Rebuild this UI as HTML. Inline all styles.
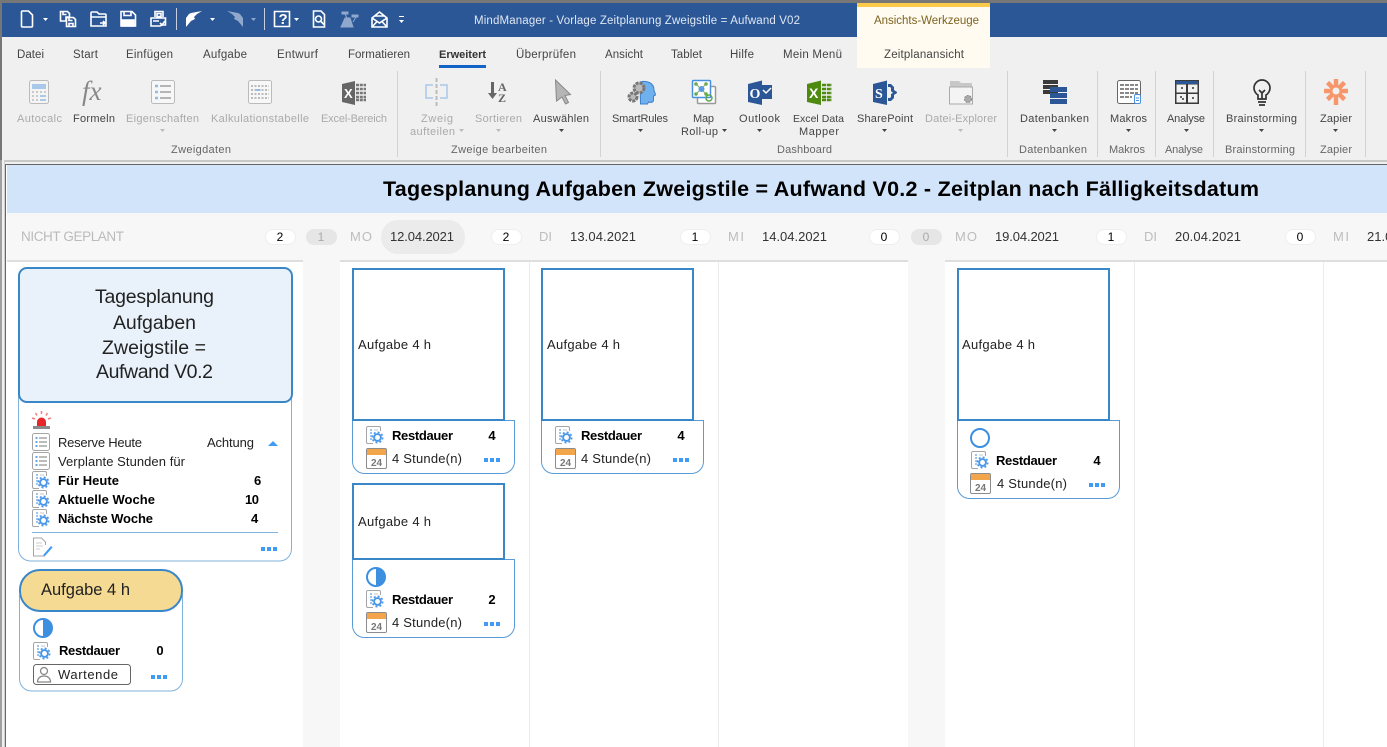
<!DOCTYPE html>
<html lang="de"><head><meta charset="utf-8"><title>MindManager</title>
<style>
html,body{margin:0;padding:0;width:1387px;height:747px;overflow:hidden;background:#fff}
svg{display:block}
text{font-family:"Liberation Sans",sans-serif;font-size:11px;fill:#444}
.d{fill:#aaa}.g{fill:#666}
.tab{font-size:11.5px;fill:#444}
.w{fill:#dfe7f3;font-size:11.5px}
.b{font-weight:bold;fill:#000;font-size:13px}
.n{fill:#222;font-size:13px}
.h{fill:#bdbdbd;font-size:13px}
.dt{fill:#333;font-size:13px}
.p{fill:#000;font-size:12px;text-anchor:middle}
.p2{fill:#aaa;font-size:12px;text-anchor:middle}
.c24{font-size:10px;font-weight:bold;fill:#777}
.ic{fill:none;stroke:#fff;stroke-width:1.6}
.t18{font-size:19.5px;fill:#222}
</style></head><body>
<svg width="1387" height="747" viewBox="0 0 1387 747" xmlns="http://www.w3.org/2000/svg">
<defs>
<symbol id="list" width="18" height="18" viewBox="0 0 18 18"><rect x=".5" y=".5" width="17" height="17" rx="2" fill="#fff" stroke="#a5a5a5"/><path d="M3.500 5h2M3.500 9h2M3.500 13h2" stroke="#6aa5e5" stroke-width="2"/><path d="M7 5h8M7 9h8M7 13h8" stroke="#a5a5a5" stroke-width="1.600"/></symbol>
<symbol id="gear" width="18" height="18" viewBox="0 0 18 18"><path d="M7 17.500H2A1.500 1.500 0 0 1 .5 16V2A1.500 1.500 0 0 1 2 .5h11A1.500 1.500 0 0 1 14.500 2v3" fill="none" stroke="#a5a5a5"/><path d="M4 4h2M4 7h2M4 10h2M4 13h2" stroke="#7ab0ea" stroke-width="1.600"/><path d="M8 4h4" stroke="#d5d5d5" stroke-width="1.400"/><circle cx="11.500" cy="11.500" r="5.500" fill="#fff"/><circle cx="11.500" cy="11.500" r="3.400" fill="#fff" stroke="#4a96e8" stroke-width="1.900"/><circle cx="11.500" cy="11.500" r="5.200" fill="none" stroke="#4a96e8" stroke-width="1.600" stroke-dasharray="2 2.080"/></symbol>
<symbol id="cal" width="21" height="21" viewBox="0 0 21 21"><rect x=".5" y=".5" width="20" height="20" rx="1.500" fill="#fff" stroke="#8c8c8c"/><rect x="1" y="1" width="19" height="6" fill="#f2a54a"/></symbol>
<symbol id="half" width="20" height="20" viewBox="0 0 20 20"><circle cx="10" cy="10" r="9" fill="#fff" stroke="#3d8fe0" stroke-width="2"/><path d="M10 1a9 9 0 0 1 0 18z" fill="#3d8fe0"/></symbol>
<symbol id="dots" width="16" height="4" viewBox="0 0 16 4"><path d="M0 0h4v4H0zM6 0h4v4H6zM12 0h4v4h-4z" fill="#3f9bf5"/></symbol>
<symbol id="arr" width="5" height="3" viewBox="0 0 5 3"><path d="M0 0h5L2.500 3z"/></symbol>
</defs>

<!-- title bar -->
<rect width="1387" height="3" fill="#777"/>
<rect y="3" width="1387" height="34" fill="#2b5797"/>
<rect y="37" width="1387" height="123" fill="#f0f0f0"/>
<rect y="0" width="2" height="160" fill="#777"/>
<!-- qat icons -->
<g class="ic">
<path d="M22.500 11h6l4 4v11a1 1 0 0 1-1 1h-9a1 1 0 0 1-1-1V12a1 1 0 0 1 1-1z"/>
<path d="M60.500 11.500h7l2 2v3.500h-3.500v4h-5.500z"/><path d="M66.500 17.500h7l2 2v7h-9z"/><path d="M63 11.500v3h3.500M69 17.500v3h3.500M69 26.500v-3h4v3"/>
<path d="M91 26V13a1 1 0 0 1 1-1h5l2 2h6a1 1 0 0 1 1 1v11zM91 17h15"/><path d="M100 23h5M103 21l2 2-2 2"/>
<path d="M121 11.500h11l3.500 3.500v11h-14.500zM124 11.500v4h7v-4"/><path d="M122 20h12v6h-12z" fill="#fff"/>
<path d="M155 17v-5.500h8V17M151 18h14.500v7H162l-2 1h-9zM157 13.500h4v3h-4z"/><path d="M153 21h6M160 23l2 2 3-4"/>
<path d="M274.500 11.500h15v15h-15z"/>
<path d="M314 11h7l3.500 3.500V27h-11V11z"/><circle cx="318.500" cy="19" r="3"/><path d="M321 21.500l3 3"/>
<path d="M372 18l7.500-6 7.500 6v9h-15zM372 18l7.500 5 7.500-5M372 27l5.500-6M387 27l-5.500-6M375 16h9"/>
</g>
<text x="278.500" y="24" style="font-size:15px;font-weight:bold;fill:#fff">?</text>
<path d="M176.500 8v22M264.500 8v22" stroke="#c5cfdf"/>
<path d="M186 27v-9l3-4 2-1 11-2-5 3-3 3 1 2-4 2z" fill="#fff"/>
<path d="M243 27v-9l-3-4-2-1-11-2 5 3 3 3-1 2 4 2z" fill="#8fa8cb"/>
<path d="M342 12h6v2h-6zM352 15h6v2h-6zM345 14l2 4M356 17l-3 5M345 18h5l3 9h-12z" fill="#8fa8cb" stroke="#8fa8cb"/>
<g fill="#fff"><use href="#arr" x="43" y="18"/><use href="#arr" x="210" y="18"/><use href="#arr" x="294" y="18"/><use href="#arr" x="399" y="20"/><rect x="399" y="16" width="5" height="1"/></g>
<use href="#arr" x="251" y="18" fill="#8fa8cb"/>
<text x="474" y="24" class="w" textLength="326">MindManager - Vorlage Zeitplanung Zweigstile = Aufwand V02</text>

<!-- context tab -->
<rect x="857" y="3" width="133" height="65" fill="#fffbf0"/>
<rect x="857" y="3" width="133" height="4" fill="#fdc94a"/>
<text x="874" y="24" textLength="105" style="fill:#7d6320;font-size:11.500px">Ansichts-Werkzeuge</text>
<text x="884" y="58" class="tab" textLength="80">Zeitplanansicht</text>

<!-- tabs -->
<text x="17" y="58" class="tab" textLength="27">Datei</text>
<text x="73" y="58" class="tab" textLength="25">Start</text>
<text x="126" y="58" class="tab" textLength="47">Einfügen</text>
<text x="203" y="58" class="tab" textLength="44">Aufgabe</text>
<text x="277" y="58" class="tab" textLength="41">Entwurf</text>
<text x="348" y="58" class="tab" textLength="62">Formatieren</text>
<text x="439" y="58" class="tab" textLength="47" style="font-weight:bold;fill:#333;font-size:11px">Erweitert</text>
<rect x="439" y="65" width="47" height="3" fill="#1464c8"/>
<text x="516" y="58" class="tab" textLength="60">Überprüfen</text>
<text x="605" y="58" class="tab" textLength="38">Ansicht</text>
<text x="671" y="58" class="tab" textLength="31">Tablet</text>
<text x="730" y="58" class="tab" textLength="24">Hilfe</text>
<text x="783" y="58" class="tab" textLength="59">Mein Menü</text>

<!-- ribbon separators -->
<path d="M397.500 71v86M600.500 71v86M1007.500 71v86M1097.500 71v86M1155.500 71v86M1213.500 71v86M1305.500 71v86M1365.500 71v86" stroke="#d2d2d2"/>

<!-- ribbon labels -->
<text x="17" y="122" class="d" textLength="45">Autocalc</text>
<text x="73" y="122" textLength="42">Formeln</text>
<text x="126" y="122" class="d" textLength="73">Eigenschaften</text>
<text x="211" y="122" class="d" textLength="98">Kalkulationstabelle</text>
<text x="321" y="122" class="d" textLength="66">Excel-Bereich</text>
<text x="421" y="122" class="d" textLength="32">Zweig</text>
<text x="410" y="135" class="d" textLength="45">aufteilen</text>
<text x="475" y="122" class="d" textLength="47">Sortieren</text>
<text x="533" y="122" textLength="56">Auswählen</text>
<text x="612" y="122" textLength="56">SmartRules</text>
<text x="693" y="122" textLength="21">Map</text>
<text x="681" y="135" textLength="37">Roll-up</text>
<text x="739" y="122" textLength="41">Outlook</text>
<text x="793" y="122" textLength="51" style="font-size:10.500px">Excel Data</text>
<text x="799" y="135" textLength="40">Mapper</text>
<text x="857" y="122" textLength="56">SharePoint</text>
<text x="925" y="122" class="d" textLength="72">Datei-Explorer</text>
<text x="1020" y="122" textLength="69">Datenbanken</text>
<text x="1110" y="122" textLength="37">Makros</text>
<text x="1167" y="122" textLength="38">Analyse</text>
<text x="1226" y="122" textLength="71">Brainstorming</text>
<text x="1320" y="122" textLength="32">Zapier</text>
<!-- group labels -->
<text x="171" y="153" class="g" textLength="60">Zweigdaten</text>
<text x="451" y="153" class="g" textLength="96">Zweige bearbeiten</text>
<text x="777" y="153" class="g" textLength="55">Dashboard</text>
<text x="1019" y="153" class="g" textLength="68">Datenbanken</text>
<text x="1109" y="153" class="g" textLength="36">Makros</text>
<text x="1165" y="153" class="g" textLength="38">Analyse</text>
<text x="1225" y="153" class="g" textLength="70">Brainstorming</text>
<text x="1320" y="153" class="g" textLength="32">Zapier</text>
<!-- dropdown arrows -->
<g fill="#bbb"><use href="#arr" x="160" y="129"/><use href="#arr" x="459" y="129"/><use href="#arr" x="496" y="129"/><use href="#arr" x="958" y="129"/></g>
<g fill="#444"><use href="#arr" x="559" y="129"/><use href="#arr" x="638" y="129"/><use href="#arr" x="722" y="129"/><use href="#arr" x="757" y="129"/><use href="#arr" x="882" y="129"/><use href="#arr" x="1052" y="129"/><use href="#arr" x="1126" y="129"/><use href="#arr" x="1184" y="129"/><use href="#arr" x="1259" y="129"/><use href="#arr" x="1333" y="129"/></g>

<!-- ribbon icons -->
<rect x="29.500" y="80.500" width="19" height="23" rx="2" fill="#f4f4f4" stroke="#bbb"/><rect x="32" y="84" width="14" height="5" fill="#a9c8ea"/><path d="M32 92h2M36 92h2M40 92h2M44 92h2M32 96h2M36 96h2M32 100h2M36 100h2" stroke="#bbb" stroke-width="1.500"/><path d="M40 96h6M40 100h6" stroke="#7fb0e0" stroke-width="1.300"/>
<text x="82" y="100" style="font-family:'Liberation Serif',serif;font-style:italic;font-size:27px;fill:#888">fx</text>
<rect x="151.500" y="80.500" width="23" height="23" rx="2" fill="#f7f7f7" stroke="#bbb"/><path d="M155 86h3M155 92h3M155 98h3" stroke="#8fbbe8" stroke-width="2.500"/><path d="M160 86h11M160 92h11M160 98h11" stroke="#b5b5b5" stroke-width="2"/>
<rect x="248.500" y="80.500" width="23" height="23" rx="2" fill="#f7f7f7" stroke="#bbb"/><path d="M251 86h18M251 90h18M251 94h18M251 98h18" stroke="#bbb" stroke-width="2" stroke-dasharray="2 1.500"/><path d="M256.500 90h4" stroke="#8fbbe8" stroke-width="2"/>
<path d="M342 84l13-3v24l-13-3z" fill="#666"/><path d="M356 85h10M356 89h10M356 93h10M356 97h10M356 100h10" stroke="#777" stroke-width="2.500" stroke-dasharray="3 .8"/><text x="344" y="98" style="font-size:13px;font-weight:bold;fill:#fff">X</text>
<path d="M436.500 78v28" stroke="#bbb" stroke-width="2" stroke-dasharray="4 2"/><path d="M433 85h-7v13h7M440 85h7v13h-7" fill="none" stroke="#a9c8ea" stroke-width="1.500"/>
<path d="M491 82h3v11h3l-4.500 6-4.500-6h3z" fill="#666"/><text x="498" y="91" style="font-family:'Liberation Serif',serif;font-size:12px;font-weight:bold;fill:#666">A</text><text x="498" y="102" style="font-family:'Liberation Serif',serif;font-size:12px;font-weight:bold;fill:#666">Z</text>
<path d="M555.500 80l15 14.500-5.500 1 3.500 7-3 1.500-3.500-7-5.500 4z" fill="#b5b5b5" stroke="#888"/>
<!-- smartrules -->
<path d="M640 82c7-2 14 1 14 8 0 2 2 4 1.500 5l-2 1v4c0 2-2 3-5 2l-1 2h-7z" fill="#6fb0ee" stroke="#3d80c8"/>
<circle cx="639" cy="88" r="5" fill="#bbb" stroke="#777" stroke-width="3" stroke-dasharray="3 1"/><circle cx="633" cy="97" r="4" fill="#bbb" stroke="#777" stroke-width="3" stroke-dasharray="3 1"/>
<!-- map roll-up -->
<rect x="697.500" y="86.500" width="18" height="17" rx="1" fill="#fff" stroke="#999" stroke-width="1.500"/><rect x="692.500" y="80.500" width="18" height="17" rx="1" fill="#fff" stroke="#4a90e0" stroke-width="1.500"/><path d="M696 84l5 5 5-5M696 94l5-5 5 5" stroke="#7fb070" fill="none"/><circle cx="701.500" cy="89" r="3" fill="#5a9be0"/><circle cx="696" cy="84" r="1.800" fill="#6aa84f"/><circle cx="706" cy="84" r="1.800" fill="#6aa84f"/><circle cx="696" cy="94" r="1.800" fill="#6aa84f"/><circle cx="706" cy="94" r="1.800" fill="#6aa84f"/><circle cx="709" cy="98" r="3" fill="none" stroke="#5aa84a" stroke-width="1.500"/>
<!-- outlook -->
<path d="M748 84l14-3.500V105l-14-3z" fill="#2b5797"/><path d="M762 85h10v14h-10z" fill="#2b5797"/><path d="M763 90l3 3 5-5" stroke="#fff" stroke-width="1.500" fill="none"/><text x="749.500" y="98" style="font-size:14px;font-weight:bold;fill:#fff;font-family:'Liberation Serif',serif">O</text>
<!-- excel -->
<path d="M807 84l14-3.500V105l-14-3z" fill="#4e8a0f"/><path d="M822 85h10M822 89h10M822 93h10M822 97h10M822 100h10" stroke="#4e8a0f" stroke-width="2.500" stroke-dasharray="4 .8"/><text x="809" y="98" style="font-size:14px;font-weight:bold;fill:#fff">X</text>
<!-- sharepoint -->
<path d="M873 84l14-3.500V105l-14-3z" fill="#2b5797"/><path d="M888 84h3l3 3v3l3 2v1l-3 2v3l-3 3h-3v-3h2l1-1v-3l2-1-2-2v-3l-1-1h-2z" fill="#2b5797"/><text x="875" y="98" style="font-size:14px;font-weight:bold;fill:#fff;font-family:'Liberation Serif',serif">S</text>
<!-- datei explorer -->
<path d="M950 83v-2h9l2 2h11v6h-22z" fill="#c8c8c8"/><path d="M949.500 104V87h23v17z" fill="#f4f4f4" stroke="#aaa"/><circle cx="968" cy="99" r="3.500" fill="#aaa" stroke="#888" stroke-dasharray="2 1"/>
<!-- datenbanken -->
<path d="M1043 80h15v4h-15zM1043 85h15v4h-15zM1043 90h15v4h-15z" fill="#3a3a3a"/><path d="M1050 87h17v5h-17zM1050 93h17v5h-17zM1050 99h17v5h-17z" fill="#2b5797"/>
<!-- makros -->
<rect x="1117.500" y="80.500" width="23" height="23" rx="2" fill="#fff" stroke="#666"/><path d="M1120 85h18M1120 89h18M1120 93h18M1120 97h12" stroke="#777" stroke-width="1.800" stroke-dasharray="4 1"/><rect x="1134.500" y="94.500" width="6" height="9" rx="1.500" fill="#fff" stroke="#4a90e0"/><path d="M1136 98h3M1136 100.500h3" stroke="#4a90e0"/>
<!-- analyse -->
<rect x="1175" y="80" width="24" height="24" fill="#3a3a3a"/><rect x="1176.500" y="84.500" width="9.500" height="8" fill="#f2f2f2"/><rect x="1188" y="84.500" width="9.500" height="8" fill="#f2f2f2"/><rect x="1176.500" y="94" width="9.500" height="8.500" fill="#f2f2f2"/><rect x="1188" y="94" width="9.500" height="8.500" fill="#f2f2f2"/><rect x="1176" y="81" width="22" height="3" fill="#2b5797"/><path d="M1181 88h2M1192 88h2M1180 97h2M1182 99h2M1192 98h2" stroke="#333" stroke-width="1.500"/>
<!-- bulb -->
<path d="M1258 99v-4c-2-1-4-4-4-7a8 8 0 0 1 16 0c0 3-2 6-4 7v4zM1258 102h8M1259 105h6M1259 90l3 3 3-3M1262 93v6" fill="none" stroke="#333" stroke-width="1.700"/>
<!-- zapier -->
<g stroke="#f5966b" stroke-width="4.500"><path d="M1336 79v26M1324 91h24M1327.500 82.500l17 17M1344.500 82.500l-17 17"/></g><circle cx="1336" cy="91" r="3.500" fill="#f0f0f0"/>

<!-- canvas frame -->
<rect y="160" width="1387" height="587" fill="#fff"/>
<rect y="160" width="1387" height="2" fill="#c8c8c8"/>
<rect y="162" width="1387" height="2" fill="#f0f0f0"/>
<rect y="164" width="1387" height="1" fill="#666"/>
<rect y="160" width="2" height="587" fill="#a0a0a0"/>
<rect x="2" y="160" width="2" height="587" fill="#f0f0f0"/>
<rect x="4" y="160" width="1" height="587" fill="#d0d0d0"/>
<rect x="5" y="164" width="1" height="583" fill="#666"/>

<!-- header -->
<rect x="7" y="165" width="1380" height="48" fill="#d2e4f9"/>
<text x="383" y="196" textLength="876" style="font-size:21.500px;font-weight:bold;fill:#000">Tagesplanung Aufgaben Zweigstile = Aufwand V0.2 - Zeitplan nach Fälligkeitsdatum</text>
<rect x="7" y="213" width="1380" height="47" fill="#f7f7f7"/>
<rect x="7" y="260" width="296" height="2" fill="#dedede"/>
<rect x="340" y="260" width="568" height="2" fill="#dedede"/>
<rect x="945" y="260" width="442" height="2" fill="#dedede"/>
<rect x="303" y="260" width="37" height="487" fill="#f7f7f7"/>
<rect x="908" y="260" width="37" height="487" fill="#f7f7f7"/>
<path d="M529.500 262V747M718.500 262V747M1134.500 262V747M1323.500 262V747" stroke="#ececec"/>

<!-- date row -->
<text x="21" y="241" class="h" textLength="103" style="font-size:13.500px;fill:#bbb">NICHT GEPLANT</text>
<rect x="265.500" y="229.500" width="30" height="15" rx="7.500" fill="#fff" stroke="#eee"/><text x="280" y="241" class="p">2</text>
<rect x="306" y="229" width="31" height="16" rx="8" fill="#e6e6e6"/><text x="321" y="241" class="p2">1</text>
<text x="350" y="241" class="h" textLength="22">MO</text>
<rect x="381" y="220" width="84" height="34" rx="17" fill="#ebebeb"/>
<text x="390" y="241" class="dt" textLength="64">12.04.2021</text>
<rect x="491.500" y="229.500" width="30" height="15" rx="7.500" fill="#fff" stroke="#eee"/><text x="506" y="241" class="p">2</text>
<text x="539" y="241" class="h" textLength="13">DI</text>
<text x="570" y="241" class="dt" textLength="66">13.04.2021</text>
<rect x="680.500" y="229.500" width="30" height="15" rx="7.500" fill="#fff" stroke="#eee"/><text x="695" y="241" class="p">1</text>
<text x="728" y="241" class="h" textLength="16">MI</text>
<text x="762" y="241" class="dt" textLength="65">14.04.2021</text>
<rect x="869.500" y="229.500" width="30" height="15" rx="7.500" fill="#fff" stroke="#eee"/><text x="884" y="241" class="p">0</text>
<rect x="911" y="229" width="31" height="16" rx="8" fill="#e6e6e6"/><text x="926" y="241" class="p2">0</text>
<text x="955" y="241" class="h" textLength="22">MO</text>
<text x="995" y="241" class="dt" textLength="64">19.04.2021</text>
<rect x="1096.500" y="229.500" width="30" height="15" rx="7.500" fill="#fff" stroke="#eee"/><text x="1111" y="241" class="p">1</text>
<text x="1144" y="241" class="h" textLength="13">DI</text>
<text x="1175" y="241" class="dt" textLength="66">20.04.2021</text>
<rect x="1285.500" y="229.500" width="30" height="15" rx="7.500" fill="#fff" stroke="#eee"/><text x="1300" y="241" class="p">0</text>
<text x="1333" y="241" class="h" textLength="16">MI</text>
<text x="1367" y="241" class="dt">21.04.2021</text>

<!-- root card -->
<path d="M18.500 395v154a12 12 0 0 0 12 12h249a12 12 0 0 0 12-12V395" fill="#fff" stroke="#7fb2dd"/>
<rect x="19" y="268" width="273" height="134" rx="8" fill="#e9f2fb" stroke="#3a87c8" stroke-width="2"/>
<text x="95" y="303" textLength="119" class="t18">Tagesplanung</text>
<text x="113" y="329" textLength="83" class="t18">Aufgaben</text>
<text x="102" y="354" textLength="104" class="t18">Zweigstile =</text>
<text x="96" y="378" textLength="117" class="t18">Aufwand V0.2</text>
<!-- siren -->
<path d="M37 426v-4a4.500 4.500 0 0 1 9 0v4z" fill="#e8262a"/><path d="M33 426h17v3H33z" fill="#8a8a8a"/><path d="M41.500 411v3M35.500 413l1.500 2.500M47.500 413l-1.500 2.500M32 418l3 1M51 418l-3 1" stroke="#f08080" stroke-width="1.500"/>
<use href="#list" x="32" y="433"/><use href="#list" x="32" y="452"/>
<use href="#gear" x="32" y="471"/><use href="#gear" x="32" y="490"/><use href="#gear" x="32" y="509"/>
<text x="58" y="447" class="n" textLength="84">Reserve Heute</text>
<text x="207" y="447" class="n" textLength="47">Achtung</text>
<path d="M268 446l5-5 5 5z" fill="#3f9bf5"/>
<text x="58" y="466" class="n" textLength="127">Verplante Stunden für</text>
<text x="58" y="485" class="b" textLength="61">Für Heute</text>
<text x="254" y="485" class="b">6</text>
<text x="58" y="504" class="b" textLength="97">Aktuelle Woche</text>
<text x="245" y="504" class="b" textLength="14">10</text>
<text x="58" y="523" class="b" textLength="95">Nächste Woche</text>
<text x="251" y="523" class="b">4</text>
<path d="M32 532.500h246" stroke="#7fb2dd"/>
<path d="M45 556H33.500v-18h8l4 4v3" fill="#fff" stroke="#a5a5a5"/><path d="M36 543h6M36 546h7M36 549h4" stroke="#ccc"/><path d="M44 554l7-8 1.500 1.500-7 8-2.500.5z" fill="#3f9bf5"/>
<use href="#dots" x="261" y="547"/>

<!-- parking card -->
<path d="M19.500 595v84a12 12 0 0 0 12 12h139a12 12 0 0 0 12-12V595" fill="#fff" stroke="#7fb2dd"/>
<rect x="20" y="570" width="162" height="41" rx="20" fill="#f5da94" stroke="#3a87c8" stroke-width="2"/>
<text x="41" y="595" textLength="89" style="font-size:16.500px;fill:#222">Aufgabe 4 h</text>
<use href="#half" x="33" y="618"/>
<use href="#gear" x="33" y="642"/>
<text x="59" y="655" class="b" textLength="61">Restdauer</text>
<text x="160" y="655" class="b" text-anchor="middle">0</text>
<rect x="33.500" y="664.500" width="97" height="20" rx="3" fill="#fff" stroke="#666"/>
<circle cx="44" cy="671" r="3.500" fill="#fff" stroke="#888" stroke-width="1.300"/><path d="M37.500 682c0-4 3-6 6.500-6s6.500 2 6.500 6z" fill="#fff" stroke="#888" stroke-width="1.300"/>
<text x="58" y="679" class="n" textLength="60">Wartende</text>
<use href="#dots" x="151" y="675"/>

<!-- task card 1 -->
<path d="M352.500 420.500h162v41a12 12 0 0 1-12 12h-138a12 12 0 0 1-12-12z" fill="#fff" stroke="#5a9bd5"/>
<rect x="353" y="269" width="151" height="151" fill="#fff" stroke="#3a87c8" stroke-width="2"/>
<text x="358" y="349" class="n" textLength="73">Aufgabe 4 h</text>
<use href="#gear" x="366" y="426"/>
<text x="392" y="440" class="b" textLength="61">Restdauer</text>
<text x="492" y="440" class="b" text-anchor="middle">4</text>
<use href="#cal" x="366" y="448"/><text x="371" y="466" class="c24">24</text>
<text x="392" y="463" class="n" textLength="70">4 Stunde(n)</text>
<use href="#dots" x="484" y="458"/>

<!-- task card 2 -->
<path d="M541.500 420.500h162v41a12 12 0 0 1-12 12h-138a12 12 0 0 1-12-12z" fill="#fff" stroke="#5a9bd5"/>
<rect x="542" y="269" width="151" height="151" fill="#fff" stroke="#3a87c8" stroke-width="2"/>
<text x="547" y="349" class="n" textLength="73">Aufgabe 4 h</text>
<use href="#gear" x="555" y="426"/>
<text x="581" y="440" class="b" textLength="61">Restdauer</text>
<text x="681" y="440" class="b" text-anchor="middle">4</text>
<use href="#cal" x="555" y="448"/><text x="560" y="466" class="c24">24</text>
<text x="581" y="463" class="n" textLength="70">4 Stunde(n)</text>
<use href="#dots" x="673" y="458"/>

<!-- task card 3 -->
<path d="M352.500 559.500h162v66a12 12 0 0 1-12 12h-138a12 12 0 0 1-12-12z" fill="#fff" stroke="#5a9bd5"/>
<rect x="353" y="484" width="151" height="75" fill="#fff" stroke="#3a87c8" stroke-width="2"/>
<text x="358" y="526" class="n" textLength="73">Aufgabe 4 h</text>
<use href="#half" x="366" y="567"/>
<use href="#gear" x="366" y="590"/>
<text x="392" y="604" class="b" textLength="61">Restdauer</text>
<text x="492" y="604" class="b" text-anchor="middle">2</text>
<use href="#cal" x="366" y="612"/><text x="371" y="630" class="c24">24</text>
<text x="392" y="627" class="n" textLength="70">4 Stunde(n)</text>
<use href="#dots" x="484" y="622"/>

<!-- task card 4 -->
<path d="M957.500 420.500h162v66a12 12 0 0 1-12 12h-138a12 12 0 0 1-12-12z" fill="#fff" stroke="#5a9bd5"/>
<rect x="958" y="269" width="151" height="151" fill="#fff" stroke="#3a87c8" stroke-width="2"/>
<text x="962" y="349" class="n" textLength="73">Aufgabe 4 h</text>
<circle cx="980" cy="438" r="9" fill="#fff" stroke="#3d8fe0" stroke-width="2"/>
<use href="#gear" x="971" y="451"/>
<text x="996" y="465" class="b" textLength="61">Restdauer</text>
<text x="1097" y="465" class="b" text-anchor="middle">4</text>
<use href="#cal" x="970" y="473"/><text x="975" y="491" class="c24">24</text>
<text x="997" y="488" class="n" textLength="70">4 Stunde(n)</text>
<use href="#dots" x="1089" y="483"/>
</svg>
</body></html>
